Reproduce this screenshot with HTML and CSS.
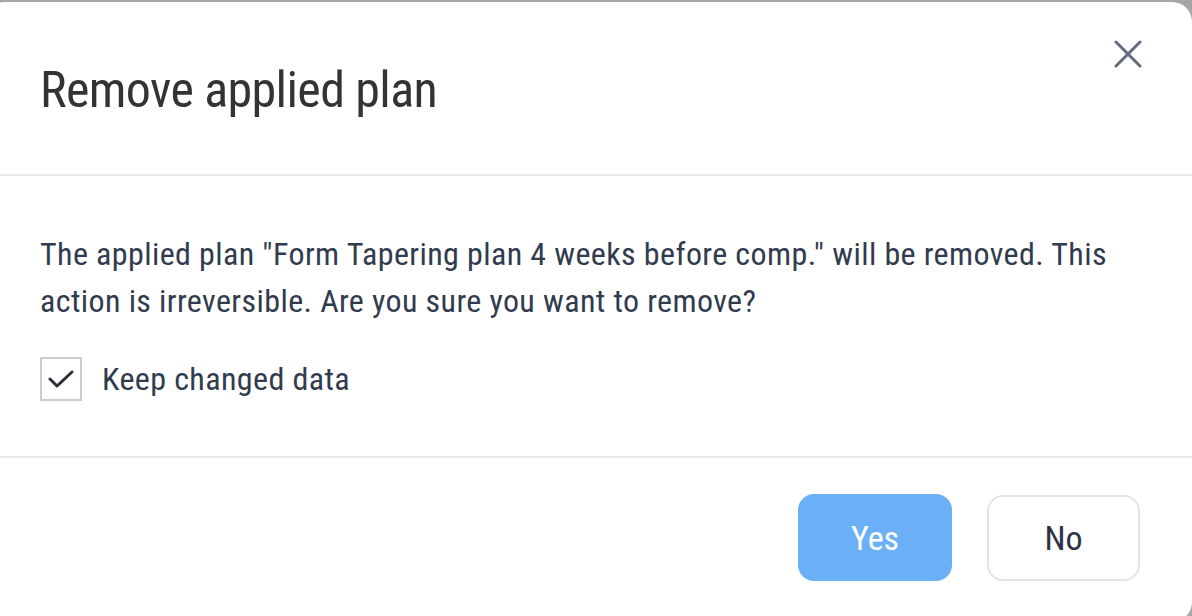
FILE: index.html
```html
<!DOCTYPE html>
<html lang="en">
<head>
    <meta charset="UTF-8">
    <meta name="viewport" content="width=device-width, initial-scale=1.0">
    <title>Remove applied plan</title>
    <link rel="stylesheet" href="styles.css">
</head>
<body>
    <div class="dialog">
        <div class="dialog-header">
            <h2 class="dialog-title">Remove applied plan</h2>
            <button class="close" aria-label="Close">
                <svg width="28" height="28" viewBox="0 0 28 28">
                    <path d="M2 2 L26 26 M26 2 L2 26" stroke="#5f6a7d" stroke-width="3" stroke-linecap="round" fill="none"/>
                </svg>
            </button>
        </div>
        <div class="dialog-body">
            <p>The applied plan "Form Tapering plan 4 weeks before comp." will be removed. This action is irreversible. Are you sure you want to remove?</p>
            <label class="check">
                <span class="check-box">
                    <svg width="26" height="20" viewBox="0 0 26 20">
                        <path d="M2 10 L9 17 L24 3" stroke="#2b2f38" stroke-width="3" stroke-linecap="round" stroke-linejoin="round" fill="none"/>
                    </svg>
                </span>
                Keep changed data
            </label>
        </div>
        <div class="dialog-footer">
            <button class="btn btn-primary">Yes</button>
            <button class="btn btn-default">No</button>
        </div>
    </div>
</body>
</html>
```

FILE: styles.css
```css
body {
    margin: 0;
    height: 616px;
    overflow: hidden;
    background-color: #a6a6a6;
    font-family: Roboto, "Liberation Sans", sans-serif;
    font-stretch: 85%;
}

.dialog {
    position: relative;
    margin: 2px 0 0 -16px;
    width: 1208px;
    height: 620px;
    background-color: #fff;
    border-radius: 20px;
    display: flex;
    flex-direction: column;
}

.dialog-header {
    height: 172px;
    border-bottom: 2px solid #e8e8ec;
    display: flex;
    align-items: center;
    padding-left: 56px;
}

.dialog-title {
    margin: 0;
    padding-top: 4px;
    font-size: 50px;
    font-weight: 400;
    letter-spacing: -0.6px;
    color: #333;
}

.close {
    position: absolute;
    top: 36px;
    right: 48px;
    width: 32px;
    height: 32px;
    padding: 2px;
    border: none;
    background: none;
    cursor: pointer;
}

.dialog-body {
    height: 282px;
    border-bottom: 2px solid #e8e8ec;
    padding: 55px 56px 0;
    box-sizing: border-box;
    color: #313b4e;
    letter-spacing: 0.4px;
}

.dialog-body p {
    margin: 0;
    font-size: 32px;
    line-height: 47px;
}

.check {
    display: flex;
    align-items: center;
    gap: 20px;
    margin-top: 32px;
    font-size: 32px;
}

.check-box {
    width: 38px;
    height: 40px;
    border: 2px solid #cdcdcd;
    display: flex;
    align-items: center;
    justify-content: center;
}

.dialog-footer {
    flex: 1;
    display: flex;
    justify-content: flex-end;
    align-items: flex-start;
    gap: 35px;
    padding: 36px 52px 0 0;
}

.btn {
    height: 87px;
    border-radius: 16px;
    font-family: inherit;
    font-stretch: inherit;
    font-size: 34px;
    cursor: pointer;
}

.btn-primary {
    width: 154px;
    border: none;
    background-color: #6bb0f6;
    color: #fff;
}

.btn-default {
    width: 153px;
    height: 86px;
    margin-top: 1px;
    border: 2px solid #e3e3e3;
    background-color: #fff;
    color: #2c3444;
}
```
